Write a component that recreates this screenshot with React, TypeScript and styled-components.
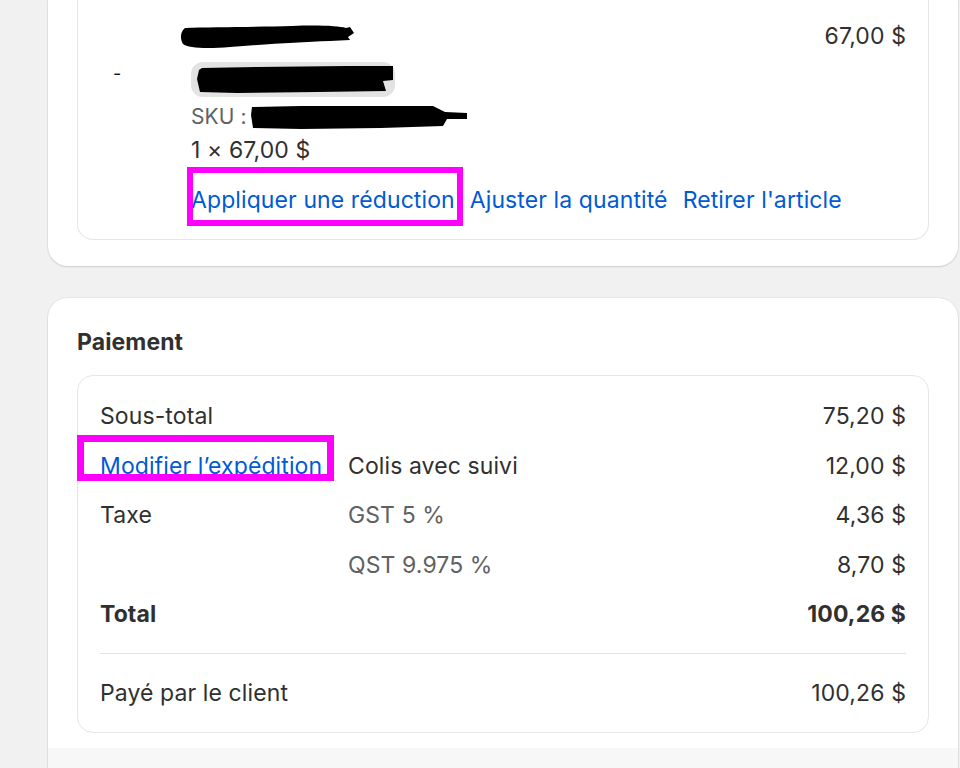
import React from "react";
import styled, { createGlobalStyle } from "styled-components";

const GlobalStyle = createGlobalStyle`
  html, body { margin: 0; padding: 0; }
  body {
    background: #f1f1f1;
    font-family: Inter, "Noto Sans", "Liberation Sans", sans-serif;
    color: #303030;
    overflow: hidden;
  }
  * { box-sizing: border-box; }
`;

const Page = styled.div`
  display: flex;
  flex-direction: column;
  gap: 32px;
  padding: 0 2px 0 48px;
  width: 960px;
  height: 768px;
  overflow: hidden;
  font-size: 23px;
  line-height: 30px;
  letter-spacing: 0.1px;
`;

const Card = styled.section<{ $cut: "top" | "bottom" }>`
  background: #ffffff;
  border-radius: ${(p) => (p.$cut === "top" ? "0 0 20px 20px" : "20px 20px 0 0")};
  box-shadow: 0 1px 2px rgba(0, 0, 0, 0.12), 0 0 0 1px rgba(0, 0, 0, 0.04);
  overflow: hidden;
  flex-shrink: 0;
`;

const CardBody = styled.div<{ $pad: string }>`
  padding: ${(p) => p.$pad};
`;

const CardFooter = styled.div`
  background: #f7f7f7;
  height: 60px;
`;

const InnerCard = styled.div<{ $cut?: boolean; $pad: string }>`
  border: 1px solid #e6e6e6;
  border-top: ${(p) => (p.$cut ? "none" : "1px solid #e6e6e6")};
  border-radius: ${(p) => (p.$cut ? "0 0 16px 16px" : "16px")};
  padding: ${(p) => p.$pad};
`;

const ItemGrid = styled.div`
  display: grid;
  grid-template-columns: 91px minmax(0, 1fr) auto;
  align-items: start;
`;

const Thumb = styled.div`
  padding: 37px 0 0 13px;
  font-size: 18px;
  color: #1a1a1a;
`;

const Details = styled.div`
  display: flex;
  flex-direction: column;
  min-width: 0;
`;

const TitleLine = styled.div`
  height: 30px;
  display: flex;
  align-items: center;
  margin-left: -11px;
`;

const Badge = styled.div`
  margin-top: 10px;
  width: 204px;
  height: 35px;
  border-radius: 12px;
  background: #e3e3e3;
  display: flex;
  align-items: center;
  padding-left: 6px;
`;

const SkuLine = styled.div`
  margin-top: 5px;
  display: flex;
  align-items: center;
  gap: 4px;
  color: #616161;
  font-size: 21px;
`;

const QtyLine = styled.div`
  margin-top: 3px;
  color: #303030;
`;

const Links = styled.div`
  margin-top: 20px;
  display: flex;
  gap: 15px;
`;

const LinkText = styled.a`
  color: #005bd3;
  text-decoration: none;
  position: relative;
  white-space: nowrap;
  cursor: pointer;
`;

const Highlight = styled.span<{ $inset: string; $w: number }>`
  position: absolute;
  inset: ${(p) => p.$inset};
  border: ${(p) => p.$w}px solid #ff00ff;
  pointer-events: none;
`;

const Price = styled.div`
  color: #303030;
  white-space: nowrap;
  margin-top: -1px;
`;

const SectionTitle = styled.h2`
  margin: 0 0 18px;
  font-size: 23px;
  line-height: 30px;
  font-weight: 650;
  color: #303030;
`;

const SummaryGrid = styled.div`
  display: grid;
  grid-template-columns: 248px 1fr auto;
  row-gap: 19.5px;
`;

const Cell = styled.div<{ $tone?: "muted" | "strong" | "link"; $right?: boolean }>`
  color: ${(p) => (p.$tone === "muted" ? "#616161" : "#303030")};
  font-weight: ${(p) => (p.$tone === "strong" ? 650 : 400)};
  text-align: ${(p) => (p.$right ? "right" : "left")};
  white-space: nowrap;
`;

const Divider = styled.hr`
  border: none;
  border-top: 1px solid #e3e3e3;
  margin: 24px 0 24px;
`;

const PaidRow = styled.div`
  display: flex;
  justify-content: space-between;
`;

const Redaction = ({ w, h, d }: { w: number; h: number; d: string }) => (
  <svg width={w} height={h} viewBox={`0 0 ${w} ${h}`} style={{ display: "block" }}>
    <path d={d} fill="#000" />
  </svg>
);

export default function App() {
  return (
    <>
      <GlobalStyle />
      <Page>
        <Card $cut="top">
          <CardBody $pad="0 29px 26px">
            <InnerCard $cut $pad="22px 22px 24px">
              <ItemGrid>
                <Thumb>-</Thumb>
                <Details>
                  <TitleLine>
                    <Redaction
                      w={176}
                      h={24}
                      d="M5 3 C30 2 80 2 112 1 C140 0 158 1 166 3 L170 2 L174 8 L168 12 L170 15 L150 16 C120 17 90 19 50 22 C26 24 8 23 3 19 C0 14 0 7 5 3 Z"
                    />
                  </TitleLine>
                  <Badge>
                    <Redaction
                      w={197}
                      h={29}
                      d="M5 3 L60 2 L150 1 L196 1 L196 15 L186 16 L189 26 L120 27 L40 28 L3 27 L0 14 L2 5 Z"
                    />
                  </Badge>
                  <SkuLine>
                    <span>SKU :</span>
                    <Redaction
                      w={216}
                      h={25}
                      d="M1 2 L50 1 L130 1 L182 1 L194 7 L216 8 L216 14 L196 14 L192 21 L130 23 L50 24 L2 23 L0 10 Z"
                    />
                  </SkuLine>
                  <QtyLine>1 × 67,00 $</QtyLine>
                  <Links>
                    <LinkText>
                      Appliquer une réduction
                      <Highlight $inset="-18px -8px -11px -4px" $w={6} />
                    </LinkText>
                    <LinkText>Ajuster la quantité</LinkText>
                    <LinkText>Retirer l'article</LinkText>
                  </Links>
                </Details>
                <Price>67,00 $</Price>
              </ItemGrid>
            </InnerCard>
          </CardBody>
        </Card>

        <Card $cut="bottom">
          <CardBody $pad="29px 29px 15px">
            <SectionTitle>Paiement</SectionTitle>
            <InnerCard $pad="25px 22px 24px">
              <SummaryGrid>
                <Cell>Sous-total</Cell>
                <Cell />
                <Cell $right>75,20 $</Cell>

                <Cell>
                  <LinkText>
                    Modifier l’expédition
                    <Highlight $inset="-17px -12px -1px -23px" $w={7} />
                  </LinkText>
                </Cell>
                <Cell>Colis avec suivi</Cell>
                <Cell $right>12,00 $</Cell>

                <Cell>Taxe</Cell>
                <Cell $tone="muted">GST 5 %</Cell>
                <Cell $right>4,36 $</Cell>

                <Cell />
                <Cell $tone="muted">QST 9.975 %</Cell>
                <Cell $right>8,70 $</Cell>

                <Cell $tone="strong">Total</Cell>
                <Cell />
                <Cell $tone="strong" $right>
                  100,26 $
                </Cell>
              </SummaryGrid>
              <Divider />
              <PaidRow>
                <Cell>Payé par le client</Cell>
                <Cell $right>100,26 $</Cell>
              </PaidRow>
            </InnerCard>
          </CardBody>
          <CardFooter />
        </Card>
      </Page>
    </>
  );
}
